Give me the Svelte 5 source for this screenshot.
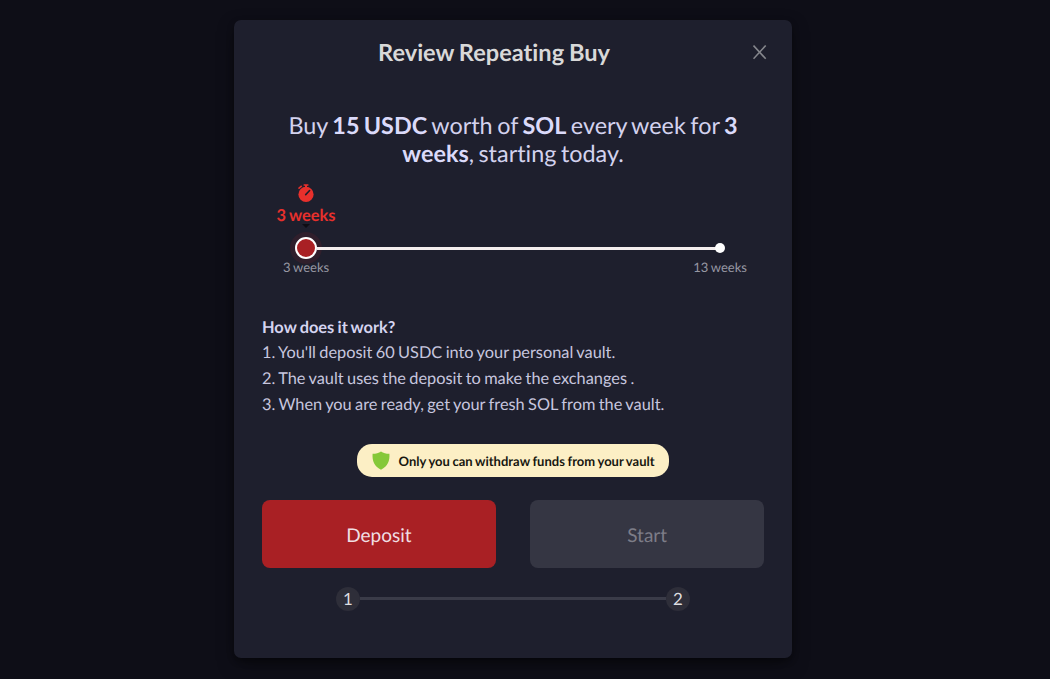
<script>
  const steps = [
    "You'll deposit 60 USDC into your personal vault.",
    'The vault uses the deposit to make the exchanges .',
    'When you are ready, get your fresh SOL from the vault.'
  ];
</script>

<main>
  <section class="dialog">
    <header>
      <h1>Review Repeating Buy</h1>
      <button class="close" aria-label="Close">
        <svg width="14" height="16" viewBox="0 0 14 16" fill="none" stroke="#85868c" stroke-width="1.6">
          <path d="M.5 1.500 12.700 14.800M12.700 1.500 .5 14.800" />
        </svg>
      </button>
    </header>

    <p class="summary">
      Buy <b>15 USDC</b> worth of <b>SOL</b> every week for <b>3<br />weeks</b>, starting today.
    </p>

    <div class="slider">
      <div class="current">
        <svg width="16" height="18" viewBox="0 0 16 18">
          <path d="M5.6.3h4.8v1.5H5.6zM7 1.5h2v2H7z" fill="#e8302c" />
          <path d="M.5 4.600 3.700 1.900" stroke="#e8302c" stroke-width="1.5" fill="none" />
          <circle cx="8" cy="10.4" r="7.6" fill="#e8302c" />
          <path d="m7.7 10.6 3.9-4.1" stroke="#1e1f2d" stroke-width="1.6" stroke-linecap="round" />
        </svg>
        <strong>3 weeks</strong>
        <i class="arrow"></i>
      </div>
      <div class="track">
        <span class="handle"></span>
        <span class="rail"></span>
        <span class="stop"></span>
      </div>
      <div class="marks"><span>3 weeks</span><span>13 weeks</span></div>
    </div>

    <div class="how">
      <h2>How does it work?</h2>
      {#each steps as step, i}
        <p>{i + 1}. {step}</p>
      {/each}
    </div>

    <div class="notice">
      <svg width="18" height="19" viewBox="0 0 18 19">
        <path d="M9 .4c2.3 1.5 5 2.2 8.4 2.4.5 7-1.500 12.500-8.400 16C2.100 15.300.1 9.800.6 2.800 4 2.600 6.700 1.900 9 .4Z" fill="#85c839" />
      </svg>
      <span>Only you can withdraw funds from your vault</span>
    </div>

    <div class="actions">
      <button class="deposit">Deposit</button>
      <button class="start" disabled>Start</button>
    </div>

    <div class="progress">
      <span class="num">1</span>
      <span class="line"></span>
      <span class="num">2</span>
    </div>
  </section>
</main>

<style>
  :global(body) { background: #0e0e17; }
  main {
    box-sizing: border-box;
    height: 679px;
    padding-top: 20px;
    overflow: hidden;
    background: #0e0e17;
    font-family: Lato, sans-serif;
    font-variant-ligatures: none;
    text-rendering: geometricPrecision;
    color: #d3d2ee;
  }
  h1, h2, p { margin: 0; }
  button { border: 0; padding: 0; background: none; font-family: inherit; text-rendering: inherit; }
  svg { display: block; }
  .dialog {
    box-sizing: border-box;
    width: 558px;
    height: 638px;
    margin-left: 234px;
    padding: 0 28px;
    display: flex;
    flex-direction: column;
    background: #1e1f2d;
    border-radius: 7px;
    box-shadow: 0 7px 19px -4px rgba(0, 0, 0, 0.5), 0 3px 7px rgba(0, 0, 0, 0.3);
  }
  header {
    display: flex;
    align-items: center;
    height: 64px;
    margin-right: -3px;
  }
  h1 {
    flex: 1;
    padding-top: 2px;
    text-align: center;
    font-size: 23.6px;
    font-weight: 700;
    word-spacing: -0.04em;
    color: #d8d8d8;
  }
  .close { width: 14px; margin-left: 27px; }
  .summary {
    margin-top: 27px;
    text-align: center;
    font-size: 23.4px;
    line-height: 28px;
    word-spacing: -0.063em;
    white-space: nowrap;
  }
  b { font-weight: 700; color: #dbdafa; }
  .slider { margin-top: 17px; height: 126px; }
  .current {
    width: 88px;
    height: 44px;
    display: flex;
    flex-direction: column;
    align-items: center;
    color: #e8302c;
  }
  .current strong { margin-top: 4px; font-size: 16.4px; line-height: 20px; word-spacing: -0.05em; }
  .arrow {
    margin-top: -2px;
    flex: none;
    border: 4px solid transparent;
    border-top-color: #0d0d14;
    border-bottom: 0;
  }
  .track {
    display: flex;
    align-items: center;
    height: 22px;
    margin: 9px 39px 0 33px;
  }
  .handle {
    box-sizing: border-box;
    width: 22px;
    height: 22px;
    border: 2.5px solid #fff;
    border-radius: 50%;
    background: #a92024;
    box-shadow: 0 0 0 5px rgba(169, 32, 36, 0.13);
  }
  .rail { flex: 1; height: 3px; background: #f4eeee; }
  .stop { width: 10px; height: 10px; border-radius: 50%; background: #fff; margin-left: -1px; }
  .marks {
    display: flex;
    justify-content: space-between;
    margin: -1px 17px 0 21px;
    font-size: 13.05px;
    line-height: 18px;
    word-spacing: -0.05em;
    color: #9797a3;
  }
  .how {
    margin-top: 4.6px;
    font-size: 16.35px;
    line-height: 25.7px;
    word-spacing: -0.05em;
    color: #c7c6df;
  }
  h2 { font-size: 16.4px; font-weight: 700; line-height: 25.7px; color: #d5d4f0; }
  .notice {
    box-sizing: border-box;
    align-self: center;
    display: flex;
    align-items: center;
    gap: 8.6px;
    width: 312px;
    height: 33px;
    margin-top: 26.4px;
    padding-left: 15px;
    border-radius: 15px;
    background: #fcefc5;
    color: #17170f;
    font-size: 13px;
    font-weight: 700;
    word-spacing: -0.04em;
    white-space: nowrap;
  }
  .notice span { padding-top: 2px; }
  .actions {
    display: grid;
    grid-template-columns: 1fr 1fr;
    gap: 34.5px;
    margin-top: 23px;
  }
  .actions button { height: 68px; padding-top: 4px; border-radius: 8px; font-size: 19px; }
  .deposit { background: #a92024; color: #f0dfe3; }
  .start { background: #353643; color: #7d7d88; }
  .progress { display: flex; align-items: center; margin: 19px 74px 0; }
  .num {
    width: 24px;
    height: 24px;
    border-radius: 50%;
    background: #2e2e39;
    color: #dedee0;
    text-align: center;
    font-size: 16.9px;
    line-height: 24px;
  }
  .line { flex: 1; height: 3px; background: #3a3b48; }
</style>
